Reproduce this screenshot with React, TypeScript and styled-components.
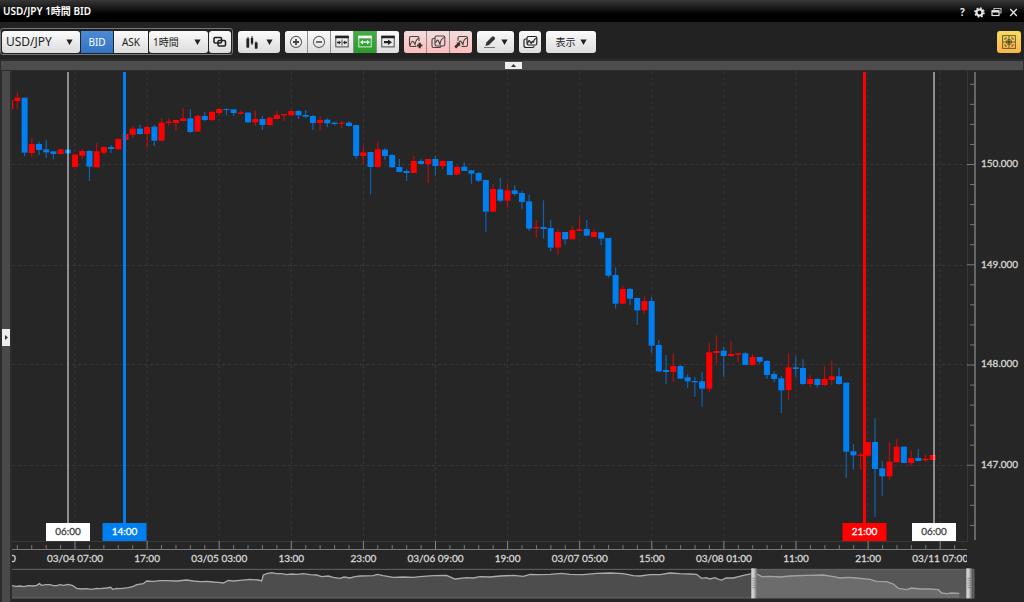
import React from "react";
import styled, { createGlobalStyle, css } from "styled-components";

const UI_FONT = '"Noto Sans", "Noto Sans CJK JP", sans-serif';
const UP = "#ff0000";
const DOWN = "#007ff0";

const GlobalStyle = createGlobalStyle`
  * { box-sizing: border-box; }
  html, body { margin: 0; background: #262626; }
  body { font-family: ${UI_FONT}; font-size: 11px; color: #fff; }
  button, select { font-family: inherit; margin: 0; padding: 0; border: 0; }
`;

const Window = styled.div`
  display: flex;
  flex-direction: column;
  min-height: 100vh;
  background: #262626;
  overflow: hidden;
`;

const TitleBar = styled.header`
  display: flex;
  align-items: center;
  justify-content: space-between;
  height: 22px;
  padding: 0 5px 0 3px;
  background: linear-gradient(#373737, #000 65%);
`;

const Title = styled.h1`
  margin: 0;
  font-size: 10px;
  line-height: 20px;
  font-weight: 600;
`;

const WindowControls = styled.div`
  display: flex;
  align-items: center;
  gap: 6px;
  padding-top: 2px;
`;

const ControlButton = styled.button`
  display: flex;
  align-items: center;
  justify-content: center;
  width: 11px;
  height: 14px;
  background: none;
  color: #e4e4e4;
  font-size: 10px;
  font-weight: 700;
`;

const Toolbar = styled.div`
  display: flex;
  align-items: center;
  gap: 5px;
  height: 37px;
  padding: 2px 3px 0 0;
  background: #222;
`;

const PairGroup = styled.div`
  display: flex;
  align-items: center;
  gap: 1px;
  height: 27px;
  padding: 1px;
  border: 1px solid #777;
  border-radius: 3px;
`;

const Group = styled.div`
  display: flex;
  gap: 1px;
  border-radius: 3px;
  overflow: hidden;
  background: #8c8c8c;
`;

const tones = {
  light: css`background: linear-gradient(#fbfbfb, #dcdcdc); color: #222;`,
  blue: css`background: linear-gradient(#4b8ad6, #3273c4); color: #fff;`,
  green: css`background: linear-gradient(#43b043, #2b992b); color: #fff;`,
  pink: css`background: linear-gradient(#f2dcdc, #ffbcbc); color: #444;`,
  gold: css`background: linear-gradient(#f7dc62, #fbb54a); color: #554a26;`,
};

const ToolButton = styled.button<{
  $tone?: keyof typeof tones;
  $width?: number;
  $gap?: number;
  $round?: boolean;
}>`
  display: flex;
  align-items: center;
  justify-content: center;
  gap: ${(p) => p.$gap ?? 4}px;
  width: ${(p) => p.$width ?? 22}px;
  height: 22px;
  font-size: 10px;
  border-radius: ${(p) => (p.$round ? 3 : 0)}px;
  ${(p) => tones[p.$tone ?? "light"]}
`;

const SelectBox = styled.label<{ $width: number }>`
  position: relative;
  display: flex;
  align-items: center;
  width: ${(p) => p.$width}px;
  height: 22px;
  border-radius: 3px;
  ${tones.light}
  > svg { position: absolute; right: 7px; pointer-events: none; }
`;

const Select = styled.select<{ $size: number }>`
  width: 100%;
  height: 22px;
  padding: 0 16px 0 4px;
  appearance: none;
  background: none;
  color: #222;
  font-size: ${(p) => p.$size}px;
`;

const Spacer = styled.div`
  flex: 1;
`;

const TopSplitter = styled.div`
  display: flex;
  justify-content: center;
  align-items: center;
  height: 12px;
  padding-left: 3px;
  background: #4d4d4d;
  border: solid #2c2c2c;
  border-width: 2px 1px 1px;
`;

const SplitHandle = styled.button<{ $vertical?: boolean }>`
  display: flex;
  align-items: center;
  justify-content: center;
  width: ${(p) => (p.$vertical ? 8 : 17)}px;
  height: ${(p) => (p.$vertical ? 17 : 7)}px;
  background: #eee;
`;

const Workspace = styled.main`
  display: grid;
  grid-template-columns: 12px minmax(0, 1fr);
  flex: 1;
`;

const SideSplitter = styled.div`
  display: flex;
  align-items: center;
  padding-top: 2px;
  background: #4a4a4a;
  border: solid #2c2c2c;
  border-width: 0 2px 0 2px;
`;

const ChartColumn = styled.div`
  display: flex;
  flex-direction: column;
`;

const Drawing = styled.svg`
  display: block;
  width: 100%;
  height: auto;
`;

const Glyph = styled.svg.attrs({ fill: "none", stroke: "currentColor" })`
  display: block;
  flex: none;
`;

const Arrow = () => (
  <Glyph width="7" height="6" viewBox="0 0 7 6">
    <path d="M0.4 0.5h6.2L3.5 6z" fill="currentColor" stroke="none" />
  </Glyph>
);

const LinkIcon = () => (
  <Glyph width="14" height="12" viewBox="0 0 14 12" stroke="#444" strokeWidth="1.6">
    <rect x="1" y="1.5" width="7.5" height="5.5" rx="1.2" />
    <rect x="5" y="4.5" width="7.5" height="5.5" rx="1.2" />
  </Glyph>
);

const BarsIcon = () => (
  <Glyph width="12" height="14" viewBox="0 0 12 14" stroke="#111">
    <path d="M1.8 3.5v9M10.2 7.5v6" strokeWidth="2.8" />
    <path d="M2 2v11M6 1v9M10 6.500v7.500" />
    <path d="M6 3v5.500" strokeWidth="2.4" />
  </Glyph>
);

const ZoomIcon = ({ plus }: { plus?: boolean }) => (
  <Glyph width="14" height="14" viewBox="0 0 14 14">
    <circle cx="7" cy="7" r="5.6" stroke="#666" strokeWidth="1.1" />
    <path d={plus ? "M4 7h6M7 4v6" : "M4 7h6"} strokeWidth={plus ? 1.8 : 1.3} stroke="#444" />
  </Glyph>
);

const FrameIcon = ({ kind }: { kind: "split" | "span" | "next" }) => (
  <Glyph width="14" height="13" viewBox="0 0 14 13">
    <rect x="0.8" y="1.3" width="12.4" height="10.6" strokeWidth="1" strokeOpacity="0.8" />
    <path d="M0.3 2h13.4" strokeWidth="2.4" />
    {kind === "split" && (
      <>
        <path d="M7 4.500v6" strokeWidth="1" strokeOpacity="0.8" />
        <path d="M2 7.500h3M9 7.500h3" strokeWidth="1.3" />
        <path d="M3.8 5.5 6 7.5l-2.2 2zM10.2 5.5 8 7.5l2.2 2z" fill="currentColor" stroke="none" />
      </>
    )}
    {kind === "span" && (
      <>
        <path d="M4 7.2h6" strokeWidth="1.3" />
        <path d="M5 4.9 2 7.2l3 2.3zM9 4.9l3 2.3-3 2.3z" fill="currentColor" stroke="none" />
      </>
    )}
    {kind === "next" && (
      <>
        <path d="M3 7.2h5" strokeWidth="2.2" />
        <path d="M7 4.4l4 2.8-4 2.8z" fill="currentColor" stroke="none" />
      </>
    )}
  </Glyph>
);

const TrendIcon = ({ kind }: { kind: "add" | "copy" | "move" }) => (
  <Glyph width="15" height="14" viewBox="0 0 15 14" stroke="#666" strokeWidth="1.1">
    {kind === "add" && (
      <>
        <path d="M11 6V3Q11 1.500 9.500 1.500H3Q1.500 1.500 1.500 3v7q0 1.500 1.500 1.500h5.500" />
        <path d="M2 10.500Q4 5 5.200 6.500T7 9.500Q8 4 10.800 3.200" />
        <path d="M11.700 7.800v5.400M9 10.500h5.400" strokeWidth="2.200" stroke="#3a3030" />
      </>
    )}
    {kind === "copy" && (
      <>
        <path d="M4 3.500H2.500Q1 3.500 1 5v6q0 1.500 1.500 1.500h6q1.500 0 1.500-1.500" />
        <rect x="4" y="1" width="9.800" height="10" rx="1.500" />
        <path d="M4.500 8Q6.500 3.500 7.500 6T9 9.500Q9.500 3.500 13.500 2.500" />
      </>
    )}
    {kind === "move" && (
      <>
        <path d="M4 6V3Q4 1.500 5.500 1.500h6.500Q13.500 1.500 13.500 3v7q0 1.500-1.500 1.500H7.500" />
        <path d="M5 7.500Q6.500 5 7.500 7T9 9.500Q9.500 3.800 13 3" />
        <path d="M2.200 7.500h4v4z" fill="#3a3030" stroke="none" />
        <path d="M1.200 12.500l3.500-3.500" strokeWidth="2.600" stroke="#3a3030" />
      </>
    )}
  </Glyph>
);

const PencilIcon = () => (
  <Glyph width="14" height="14" viewBox="0 0 14 14">
    <path d="M2.500 11l.8-3.500L9 1.800q1-.9 2 0l.7.800q.7.900-.1 1.800L6 10z" fill="#333" stroke="none" />
    <path d="M1 12.500h11" stroke="#777" />
  </Glyph>
);

const StackIcon = () => (
  <Glyph width="15" height="14" viewBox="0 0 15 14" stroke="#666" strokeWidth="1.200">
    <path d="M3.500 4H2.500Q1 4 1 5.500v5Q1 12.500 3 12.500h6.500q1.500 0 1.500-1.500" />
    <rect x="4" y="1.500" width="9.800" height="8.500" rx="1.500" />
    <path d="M4.500 8.500Q6 4 7 6.500T8.500 8q1-3 1.700-.5Q11 4 13.500 3" />
  </Glyph>
);

const TargetIcon = () => (
  <Glyph width="14" height="14" viewBox="0 0 14 14" strokeOpacity="0.850">
    <rect x="0.600" y="0.600" width="12.800" height="12.800" />
    <path d="M7 1v12M1 7h12" />
    <path d="M3 5V3h2M9 3h2v2M11 9v2H9M5 11H3V9" />
    <circle cx="7" cy="7" r="2.600" />
    <circle cx="7" cy="7" r="1.200" fill="currentColor" />
  </Glyph>
);

const GearIcon = () => (
  <Glyph width="11" height="11" viewBox="0 0 11 11">
    <circle cx="5.500" cy="5.500" r="3" strokeWidth="2.200" />
    <circle cx="5.500" cy="5.500" r="4.500" strokeWidth="1.600" strokeDasharray="1.767 1.767" />
  </Glyph>
);

const RestoreIcon = () => (
  <Glyph width="11" height="10" viewBox="0 0 11 10">
    <path d="M3 3V1.500h7V6H8.500" strokeWidth="1.200" strokeOpacity="0.750" />
    <rect x="1" y="3.800" width="7" height="4.700" strokeWidth="1.200" />
    <path d="M1 4.500h7" strokeWidth="2" />
  </Glyph>
);

const CloseIcon = () => (
  <Glyph width="9" height="9" viewBox="0 0 9 9">
    <path d="M1.200 1l6.600 7M7.800 1L1.200 8" strokeWidth="1.300" />
  </Glyph>
);

/* Candles: [direction, body top, body bottom, wick top, wick bottom].
   Values are thirds of a chart unit below the base of their run. */
type Candle = ["u" | "d", number, number, number, number];
const RUNS: { base: number; candles: Candle[] }[] = [
  {
    base: 70,
    candles: [
      ["u", 90, 117, 90, 117], ["u", 83, 93, 68, 117], ["d", 83, 248, 83, 259], ["u", 222, 249, 204, 262],
      ["d", 222, 240, 215, 255], ["d", 238, 247, 210, 264], ["d", 244, 252, 244, 268], ["u", 238, 252, 236, 253],
      ["d", 239, 250, 237, 252], ["u", 254, 291, 250, 291], ["u", 243, 257, 238, 266], ["d", 243, 290, 240, 333],
      ["u", 244, 292, 220, 292], ["u", 231, 248, 229, 253], ["d", 231, 237, 226, 250], ["u", 207, 238, 205, 240],
      ["u", 192, 210, 190, 212], ["u", 176, 194, 168, 204], ["d", 176, 192, 164, 194], ["u", 171, 192, 168, 233],
      ["d", 170, 212, 165, 228], ["u", 158, 212, 145, 212], ["u", 155, 159, 145, 168], ["u", 150, 159, 150, 182],
      ["u", 145, 153, 114, 153], ["d", 145, 186, 118, 190], ["u", 137, 185, 135, 185], ["d", 138, 150, 126, 154],
      ["u", 126, 150, 122, 153], ["u", 117, 129, 115, 135], ["d", 117, 120, 115, 136], ["d", 118, 129, 118, 138],
      ["u", 127, 131, 121, 134], ["d", 128, 157, 126, 160], ["u", 147, 157, 121, 168],
    ],
  },
  {
    base: 90,
    candles: [
      ["d", 87, 105, 78, 120], ["u", 83, 105, 80, 108], ["u", 75, 87, 62, 87], ["u", 72, 76, 72, 93],
      ["u", 63, 76, 61, 78], ["d", 63, 76, 60, 87], ["d", 75, 80, 60, 84], ["d", 78, 99, 75, 120],
      ["u", 90, 99, 78, 121], ["d", 89, 100, 85, 112], ["d", 98, 102, 95, 107], ["u", 98, 101, 93, 115],
      ["d", 98, 108, 93, 110], ["d", 105, 198, 105, 206], ["u", 187, 198, 168, 224], ["d", 186, 231, 186, 312],
      ["u", 178, 231, 155, 233], ["d", 179, 198, 174, 209], ["d", 195, 232, 191, 233], ["d", 231, 246, 207, 246],
      ["d", 243, 249, 238, 273], ["u", 213, 249, 198, 249], ["d", 213, 222, 208, 223], ["u", 207, 222, 207, 279],
      ["d", 207, 228, 198, 256], ["u", 213, 228, 211, 237], ["d", 213, 255, 213, 255], ["u", 230, 254, 228, 255],
      ["d", 230, 243, 217, 243], ["d", 241, 251, 240, 281], ["d", 249, 272, 245, 276], ["d", 270, 365, 270, 426],
      ["u", 297, 365, 282, 365], ["d", 298, 332, 264, 337], ["u", 301, 332, 281, 353],
    ],
  },
  {
    base: 150,
    candles: [
      ["d", 121, 132, 105, 137], ["d", 129, 156, 122, 178], ["d", 154, 236, 134, 243], ["u", 231, 235, 210, 263],
      ["d", 231, 237, 151, 266], ["d", 234, 293, 209, 304], ["u", 246, 293, 237, 316], ["d", 246, 268, 246, 284],
      ["u", 240, 268, 228, 268], ["u", 238, 243, 202, 243], ["d", 237, 257, 209, 258], ["u", 246, 261, 236, 262],
      ["d", 247, 266, 246, 286], ["d", 264, 377, 264, 382], ["d", 375, 461, 352, 476], ["u", 417, 461, 407, 462],
      ["d", 417, 446, 413, 464], ["d", 444, 481, 443, 524], ["u", 453, 481, 440, 491], ["d", 453, 587, 440, 608],
      ["d", 585, 664, 569, 665],
    ],
  },
  {
    base: 280,
    candles: [
      ["d", 270, 276, 225, 311], ["u", 258, 276, 222, 305], ["d", 258, 296, 256, 297], ["d", 292, 304, 283, 324],
      ["d", 303, 307, 291, 350], ["d", 304, 326, 277, 380], ["u", 217, 326, 189, 336], ["u", 213, 219, 166, 250],
      ["d", 212, 228, 200, 290], ["u", 222, 228, 183, 230], ["u", 220, 224, 218, 247], ["d", 220, 255, 215, 256],
      ["u", 231, 255, 222, 257], ["d", 231, 245, 230, 253], ["d", 243, 285, 240, 297], ["d", 282, 297, 273, 307],
      ["d", 295, 331, 288, 399], ["u", 262, 330, 220, 359], ["d", 262, 267, 227, 291], ["d", 264, 312, 238, 314],
      ["u", 297, 312, 284, 322], ["d", 297, 315, 295, 322], ["u", 297, 315, 259, 317],
    ],
  },
  {
    base: 320,
    candles: [
      ["u", 169, 180, 122, 195], ["d", 169, 192, 144, 194], ["d", 188, 395, 188, 473], ["d", 394, 406, 373, 449],
      ["u", 404, 408, 398, 449], ["u", 366, 407, 366, 409], ["d", 366, 447, 295, 591], ["d", 445, 469, 423, 527],
      ["u", 425, 469, 366, 481], ["u", 380, 427, 357, 427], ["d", 380, 429, 380, 429], ["u", 414, 429, 391, 438],
      ["d", 414, 423, 387, 423], ["u", 416, 421, 404, 426], ["u", 405, 420, 405, 420],
    ],
  },
];

const CANDLES = RUNS.flatMap((run) =>
  run.candles.map(([dir, ...ys]) => ({ dir, ys: ys.map((v) => run.base + v / 3) })),
);
const FIRST_X = 10.2;
const PITCH = 7.207;

const TIME_LABELS = [
  "21:00", "03/04 07:00", "17:00", "03/05 03:00", "13:00", "23:00", "03/06 09:00",
  "19:00", "03/07 05:00", "15:00", "03/08 01:00", "11:00", "21:00", "03/11 07:00",
];
const timeX = (i: number) => 2.9 + i * 72.1;

const PRICES = [
  { label: "150.000", y: 164 },
  { label: "149.000", y: 265 },
  { label: "148.000", y: 364 },
  { label: "147.000", y: 465 },
];

const MARKERS = [
  { time: "06:00", x: 68, line: "#fff", opacity: 0.48, fill: "#fff", ink: "#444", width: 2 },
  { time: "14:00", x: 124.5, line: DOWN, opacity: 1, fill: DOWN, ink: "#fff", width: 3 },
  { time: "21:00", x: 864.5, line: UP, opacity: 1, fill: UP, ink: "#fff", width: 3 },
  { time: "06:00", x: 934, line: "#fff", opacity: 0.48, fill: "#fff", ink: "#444", width: 2 },
];

const AxisText = styled.text<{ $ink?: string }>`
  font-family: Lato, sans-serif;
  font-size: 10px;
  fill: ${(p) => p.$ink ?? "#d6d6d6"};
  stroke: ${(p) => p.$ink ?? "#d6d6d6"};
  stroke-width: 0.3px;
`;

const PriceChart = () => (
  <Drawing viewBox="12 71 1012 497" role="img" aria-label="USD/JPY">
    <defs>
      <clipPath id="plot"><rect x="12" y="71" width="955" height="497" /></clipPath>
    </defs>
    <g stroke="#373737" strokeDasharray="3 3">
      {PRICES.map((p) => <path key={p.label} d={`M12 ${p.y + 0.5}H967`} />)}
      {TIME_LABELS.slice(1).map((_, i) => <path key={i} d={`M${timeX(i + 1)} 71V541`} />)}
    </g>
    <path d="M967.5 71V541.5H12" stroke="#383838" fill="none" />
    <g clipPath="url(#plot)">
      {CANDLES.map(({ dir, ys: [top, bottom, high, low] }, i) => {
        const x = FIRST_X + i * PITCH;
        const color = dir === "u" ? UP : DOWN;
        return (
          <g key={i}>
            <path d={`M${x} ${high}V${low}`} stroke={color} strokeOpacity="0.7" strokeWidth="1.2" />
            <rect x={x - 3} y={top} width="6" height={bottom - top} fill={color} />
          </g>
        );
      })}
      {MARKERS.map((m) => (
        <path key={m.x} d={`M${m.x} 72V530`} stroke={m.line} strokeOpacity={m.opacity} strokeWidth={m.width} />
      ))}
      <path d="M12 549.5H967" stroke="#777" />
      {TIME_LABELS.map((label, i) => (
        <g key={i}>
          <path d={`M${timeX(i)} 541V549`} stroke="#888" />
          {[1, 2, 3, 4].map((n) => (
            <path key={n} d={`M${timeX(i) + n * 14.42} 545V549`} stroke="#777" />
          ))}
          <AxisText x={timeX(i)} y="562" textAnchor="middle">{label}</AxisText>
        </g>
      ))}
    </g>
    <path d="M975 72V540" stroke="#666" strokeWidth="2" />
    {Array.from({ length: 23 }, (_, i) => {
      const major = i % 5 === 4;
      return <path key={i} d={`M${major ? 967 : 970} ${84.3 + i * 20.05}H975`} stroke="#777" />;
    })}
    {PRICES.map((p) => <AxisText key={p.label} x="981" y={p.y + 3}>{p.label}</AxisText>)}
    {MARKERS.map((m) => (
      <g key={m.x}>
        <rect x={m.x - 22} y="523" width="44" height="18" fill={m.fill} />
        <AxisText x={m.x} y="535" textAnchor="middle" $ink={m.ink}>{m.time}</AxisText>
      </g>
    ))}
  </Drawing>
);

const HISTORY =
  "36,257 48,259 60,258 72,260 84,257 100,258 110,256 118,251 125,256 138,254 150,254 160,257 170,257 180,254 190,256 205,253 218,257 230,265 245,267 260,266 275,268 290,265 300,266 320,264 332,262 338,268 350,265 360,266 385,263 400,259 410,254 430,251 440,243 460,244 480,242 500,242 530,243 560,240 580,243 600,245 620,244 640,246 655,247 670,249 685,241 700,243 720,241 750,238 775,240 785,243 790,225 800,221 815,218 830,221 845,221 860,224 875,222 890,223 910,221 930,224 950,225 965,230 985,228 1000,232 1020,235 1032,231 1050,234 1065,230 1080,228 1120,227 1132,223 1150,227 1180,232 1210,231 1240,232 1260,230 1300,227 1340,226 1365,237 1400,233 1420,234 1440,230 1470,231 1500,228 1540,226 1570,229 1590,223 1610,224 1650,223 1685,220 1710,223 1750,224 1790,220 1830,219 1870,221 1900,227 1920,228 1950,224 1980,224 2010,219 2040,221 2070,222 2090,223 2105,235 2118,233 2130,237 2145,233 2158,239 2165,240 2178,234 2200,234 2230,226 2255,221 2275,224 2285,230 2310,229 2340,231 2370,228 2420,226 2470,225 2500,230 2520,234 2545,232 2570,234 2610,238 2630,244 2660,245 2680,252 2695,265 2720,269 2735,264 2760,267 2790,267 2815,269 2825,279 2840,281 2855,279 2878,280";

const Navigator = () => (
  <Drawing viewBox="36 204 3036 102" role="img" aria-label="History range">
    <defs>
      <linearGradient id="grip">
        <stop offset="0" stopColor="#999" />
        <stop offset="0.3" stopColor="#ddd" />
        <stop offset="0.65" stopColor="#aaa" />
        <stop offset="1" stopColor="#666" />
      </linearGradient>
    </defs>
    <polygon points={`36,294 ${HISTORY} 2878,294`} fill="#4d4d4d" />
    <polyline points={HISTORY} fill="none" stroke="#aaa" strokeWidth="4" />
    <rect x="2262" y="207" width="660" height="87" fill="#999" fillOpacity="0.42" />
    <path d="M36 208H2922V294H36" fill="none" stroke="#666" strokeWidth="3" />
    {[2253, 2898].map((x) => (
      <g key={x}>
        <rect x={x} y="205" width="18" height="90" fill="url(#grip)" />
        <path d={`M${x + 4} 235h12M${x + 4} 242h12M${x + 4} 249h12M${x + 4} 256h12M${x + 4} 263h12`} stroke="#777" strokeWidth="2" />
      </g>
    ))}
  </Drawing>
);

export default function App() {
  return (
    <Window>
      <GlobalStyle />
      <TitleBar>
        <Title>USD/JPY 1時間 BID</Title>
        <WindowControls>
          <ControlButton aria-label="Help">?</ControlButton>
          <ControlButton aria-label="Settings"><GearIcon /></ControlButton>
          <ControlButton aria-label="Restore"><RestoreIcon /></ControlButton>
          <ControlButton aria-label="Close"><CloseIcon /></ControlButton>
        </WindowControls>
      </TitleBar>
      <Toolbar>
        <PairGroup>
          <SelectBox $width={78}>
            <Select $size={12} aria-label="Currency pair"><option>USD/JPY</option></Select>
            <Arrow />
          </SelectBox>
          <ToolButton $tone="blue" $width={32}>BID</ToolButton>
          <ToolButton $width={34}>ASK</ToolButton>
          <SelectBox $width={59}>
            <Select $size={10} aria-label="Period"><option>1時間</option></Select>
            <Arrow />
          </SelectBox>
          <ToolButton $round aria-label="Link"><LinkIcon /></ToolButton>
        </PairGroup>
        <ToolButton $round $width={42} $gap={8} aria-label="Chart type"><BarsIcon /><Arrow /></ToolButton>
        <Group>
          <ToolButton aria-label="Zoom in"><ZoomIcon plus /></ToolButton>
          <ToolButton aria-label="Zoom out"><ZoomIcon /></ToolButton>
          <ToolButton aria-label="Narrow"><FrameIcon kind="split" /></ToolButton>
          <ToolButton $tone="green" aria-label="Fit"><FrameIcon kind="span" /></ToolButton>
          <ToolButton aria-label="Latest"><FrameIcon kind="next" /></ToolButton>
        </Group>
        <Group>
          <ToolButton $tone="pink" aria-label="Add trend"><TrendIcon kind="add" /></ToolButton>
          <ToolButton $tone="pink" aria-label="Copy trend"><TrendIcon kind="copy" /></ToolButton>
          <ToolButton $tone="pink" aria-label="Move trend"><TrendIcon kind="move" /></ToolButton>
        </Group>
        <ToolButton $round $width={37} aria-label="Draw"><PencilIcon /><Arrow /></ToolButton>
        <ToolButton $round aria-label="Layers"><StackIcon /></ToolButton>
        <ToolButton $round $width={50}>表示<Arrow /></ToolButton>
        <Spacer />
        <ToolButton $round $tone="gold" $width={24} aria-label="Crosshair"><TargetIcon /></ToolButton>
      </Toolbar>
      <TopSplitter>
        <SplitHandle aria-label="Collapse toolbar">
          <Glyph width="5" height="3" viewBox="0 0 5 3"><path d="M0 3h5L2.5 0z" fill="#333" stroke="none" /></Glyph>
        </SplitHandle>
      </TopSplitter>
      <Workspace>
        <SideSplitter>
          <SplitHandle $vertical aria-label="Expand side panel">
            <Glyph width="3" height="5" viewBox="0 0 3 5"><path d="M0 0v5L3 2.5z" fill="#333" stroke="none" /></Glyph>
          </SplitHandle>
        </SideSplitter>
        <ChartColumn>
          <PriceChart />
          <Navigator />
        </ChartColumn>
      </Workspace>
    </Window>
  );
}
